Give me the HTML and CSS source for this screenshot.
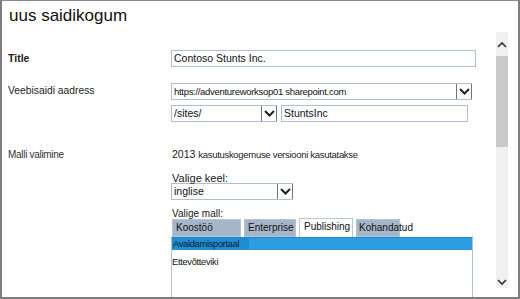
FILE: index.html
```html
<!DOCTYPE html>
<html>
<head>
<meta charset="utf-8">
<link rel="stylesheet" href="styles.css">
</head>
<body>
<div class="frame">
  <div class="main">
    <h1 class="title">uus saidikogum</h1>
    <div class="form">
      <div class="row row-title">
        <div class="label bold">Title</div>
        <div class="ctrl">
          <div class="input w-title">Contoso Stunts Inc.</div>
        </div>
      </div>
      <div class="row row-url">
        <div class="label">Veebisaidi aadress</div>
        <div class="ctrl">
          <div class="select w-url"><span class="val small">https://adventureworksop01 sharepoint.com</span><span class="btn"><svg width="11" height="7" viewBox="0 0 11 7"><path d="M1 1 L5.5 5.5 L10 1" fill="none" stroke="#222" stroke-width="2"/></svg></span></div>
          <div class="line2">
            <div class="select w-sites"><span class="val">/sites/</span><span class="btn"><svg width="11" height="7" viewBox="0 0 11 7"><path d="M1 1 L5.5 5.5 L10 1" fill="none" stroke="#222" stroke-width="2"/></svg></span></div>
            <div class="input w-name">StuntsInc</div>
          </div>
        </div>
      </div>
      <div class="row row-tpl">
        <div class="label small-label">Malli valimine</div>
        <div class="ctrl">
          <div class="ver"><span class="yr">2013</span> <span class="small">kasutuskogemuse versiooni kasutatakse</span></div>
          <div class="sub">Valige keel:</div>
          <div class="select w-lang"><span class="val">inglise</span><span class="btn"><svg width="11" height="7" viewBox="0 0 11 7"><path d="M1 1 L5.5 5.5 L10 1" fill="none" stroke="#222" stroke-width="2"/></svg></span></div>
          <div class="sub sub2">Valige mall:</div>
          <div class="tabs">
            <div class="tab t1">Koostöö</div>
            <div class="tab t2">Enterprise</div>
            <div class="tab active t3">Publishing</div>
            <div class="tab t4">Kohandatud</div>
          </div>
          <div class="list">
            <div class="item sel"><span class="selbox">Avaldamisportaal</span></div>
            <div class="item">Ettevõtteviki</div>
          </div>
        </div>
      </div>
    </div>
  </div>
  <div class="scroll">
    <div class="arrow up"><svg width="10" height="7" viewBox="0 0 10 7"><path d="M1 6 L5 2 L9 6" fill="none" stroke="#333" stroke-width="1.6"/></svg></div>
    <div class="thumb"></div>
    <div class="track"></div>
    <div class="arrow down"><svg width="10" height="7" viewBox="0 0 10 7"><path d="M1 1 L5 5 L9 1" fill="none" stroke="#333" stroke-width="1.6"/></svg></div>
  </div>
</div>
</body>
</html>
```
FILE: styles.css
```css
html, body {
  margin: 0;
  padding: 0;
  background: #fff;
}
body {
  width: 520px;
  height: 299px;
  overflow: hidden;
  font-family: "Liberation Sans", Arial, sans-serif;
  color: #222;
}
.frame {
  box-sizing: border-box;
  width: 520px;
  height: 299px;
  border-left: 2px solid #7d7d7d;
  border-right: 2px solid #7d7d7d;
  border-top: 1px solid #8a8a8a;
  border-bottom: 2px solid #7d7d7d;
  display: flex;
  overflow: hidden;
}
.main {
  flex: 0 0 492px;
  overflow: hidden;
}
.title {
  margin: 0;
  padding: 3px 0 0 7px;
  height: 26px;
  font-weight: 400;
  font-size: 17px;
  line-height: 24px;
  color: #111;
}
.form {
  padding-left: 6px;
}
.row {
  display: flex;
}
.label {
  flex: 0 0 163px;
  font-size: 10.3px;
  color: #222;
}
.bold {
  font-weight: 700;
  font-size: 10.5px;
}
.small-label {
  font-size: 10px;
  color: #333;
  letter-spacing: -0.3px;
}
.ctrl {
  flex: 1;
}
.row-title {
  margin-top: 20px;
}
.row-title .label {
  line-height: 16px;
}
.row-url {
  margin-top: 16px;
}
.row-url .label {
  line-height: 16px;
}
.row-tpl {
  margin-top: 25px;
}
.row-tpl .label {
  line-height: 16px;
}
.input, .select {
  box-sizing: border-box;
  height: 17px;
  border: 1px solid #aebfd3;
  font-size: 10.5px;
  line-height: 15px;
  padding-left: 2px;
  color: #111;
  white-space: nowrap;
  overflow: hidden;
  background: #fff;
}
.w-title {
  width: 305px;
}
.select {
  display: flex;
  align-items: center;
  border-right: none;
}
.select .val {
  flex: 1;
  overflow: hidden;
}
.btn {
  box-sizing: border-box;
  flex: 0 0 16px;
  height: 17px;
  margin-top: -1px;
  margin-bottom: -1px;
  border: 1px solid #6e7780;
  display: flex;
  align-items: center;
  justify-content: center;
  background: #fff;
}
.small {
  font-size: 9.5px;
  letter-spacing: -0.3px;
}
.w-url {
  width: 301px;
}
.line2 {
  display: flex;
  gap: 4px;
  margin-top: 5px;
}
.w-sites {
  width: 106px;
}
.w-name {
  width: 187px;
}
.ver {
  font-size: 10.5px;
  line-height: 14px;
  color: #222;
  padding-left: 1px;
}
.sub {
  font-size: 11px;
  line-height: 14px;
  margin-top: 9px;
  padding-left: 1px;
  color: #222;
}
.w-lang {
  width: 122px;
  margin-top: -2px;
}
.sub2 {
  font-size: 10px;
  margin-top: 7px;
  line-height: 13px;
}
.tabs {
  display: flex;
  gap: 3px;
  margin-top: -2px;
  height: 19px;
  padding-left: 1px;
  align-items: flex-end;
}
.tab {
  box-sizing: border-box;
  height: 18px;
  font-size: 10px;
  line-height: 16px;
  padding-left: 4px;
  background: #a6b6c8;
  border: 1px solid #b5c4d4;
  color: #111;
  white-space: nowrap;
}
.t1 { width: 69px; padding-left: 3px; }
.t2 { width: 52px; padding-left: 3px; }
.t3 { width: 54px; height: 19px; background: #fff; border-color: #b9c8d6; border-bottom: none; padding-left: 4px; }
.t4 { width: 44px; padding-left: 2px; }
.list {
  box-sizing: border-box;
  width: 302px;
  height: 70px;
  border: 1px solid #b3c3d3;
  border-top: 1px solid #1e8bd0;
}
.item {
  font-size: 9.3px;
  line-height: 12px;
  height: 12px;
  letter-spacing: -0.3px;
  color: #111;
  margin-top: 6px;
}
.item.sel {
  margin-top: 0;
  background: #2b9de0;
}
.selbox {
  display: inline-block;
  width: 76px;
  background: #1e8ed3;
  padding-left: 1px;
  color: #0b1a2a;
}
.scroll {
  flex: 0 0 12px;
  margin-left: 2px;
  margin-top: 31px;
  height: 256px;
  background: #f0f0f0;
  display: flex;
  flex-direction: column;
}
.arrow {
  height: 24px;
  display: flex;
  align-items: center;
  justify-content: center;
}
.thumb {
  height: 91px;
  background: #c9c9c9;
}
.track {
  flex: 1;
}
.down {
  height: 20px;
  align-items: flex-end;
  padding-bottom: 2px;
}
```
